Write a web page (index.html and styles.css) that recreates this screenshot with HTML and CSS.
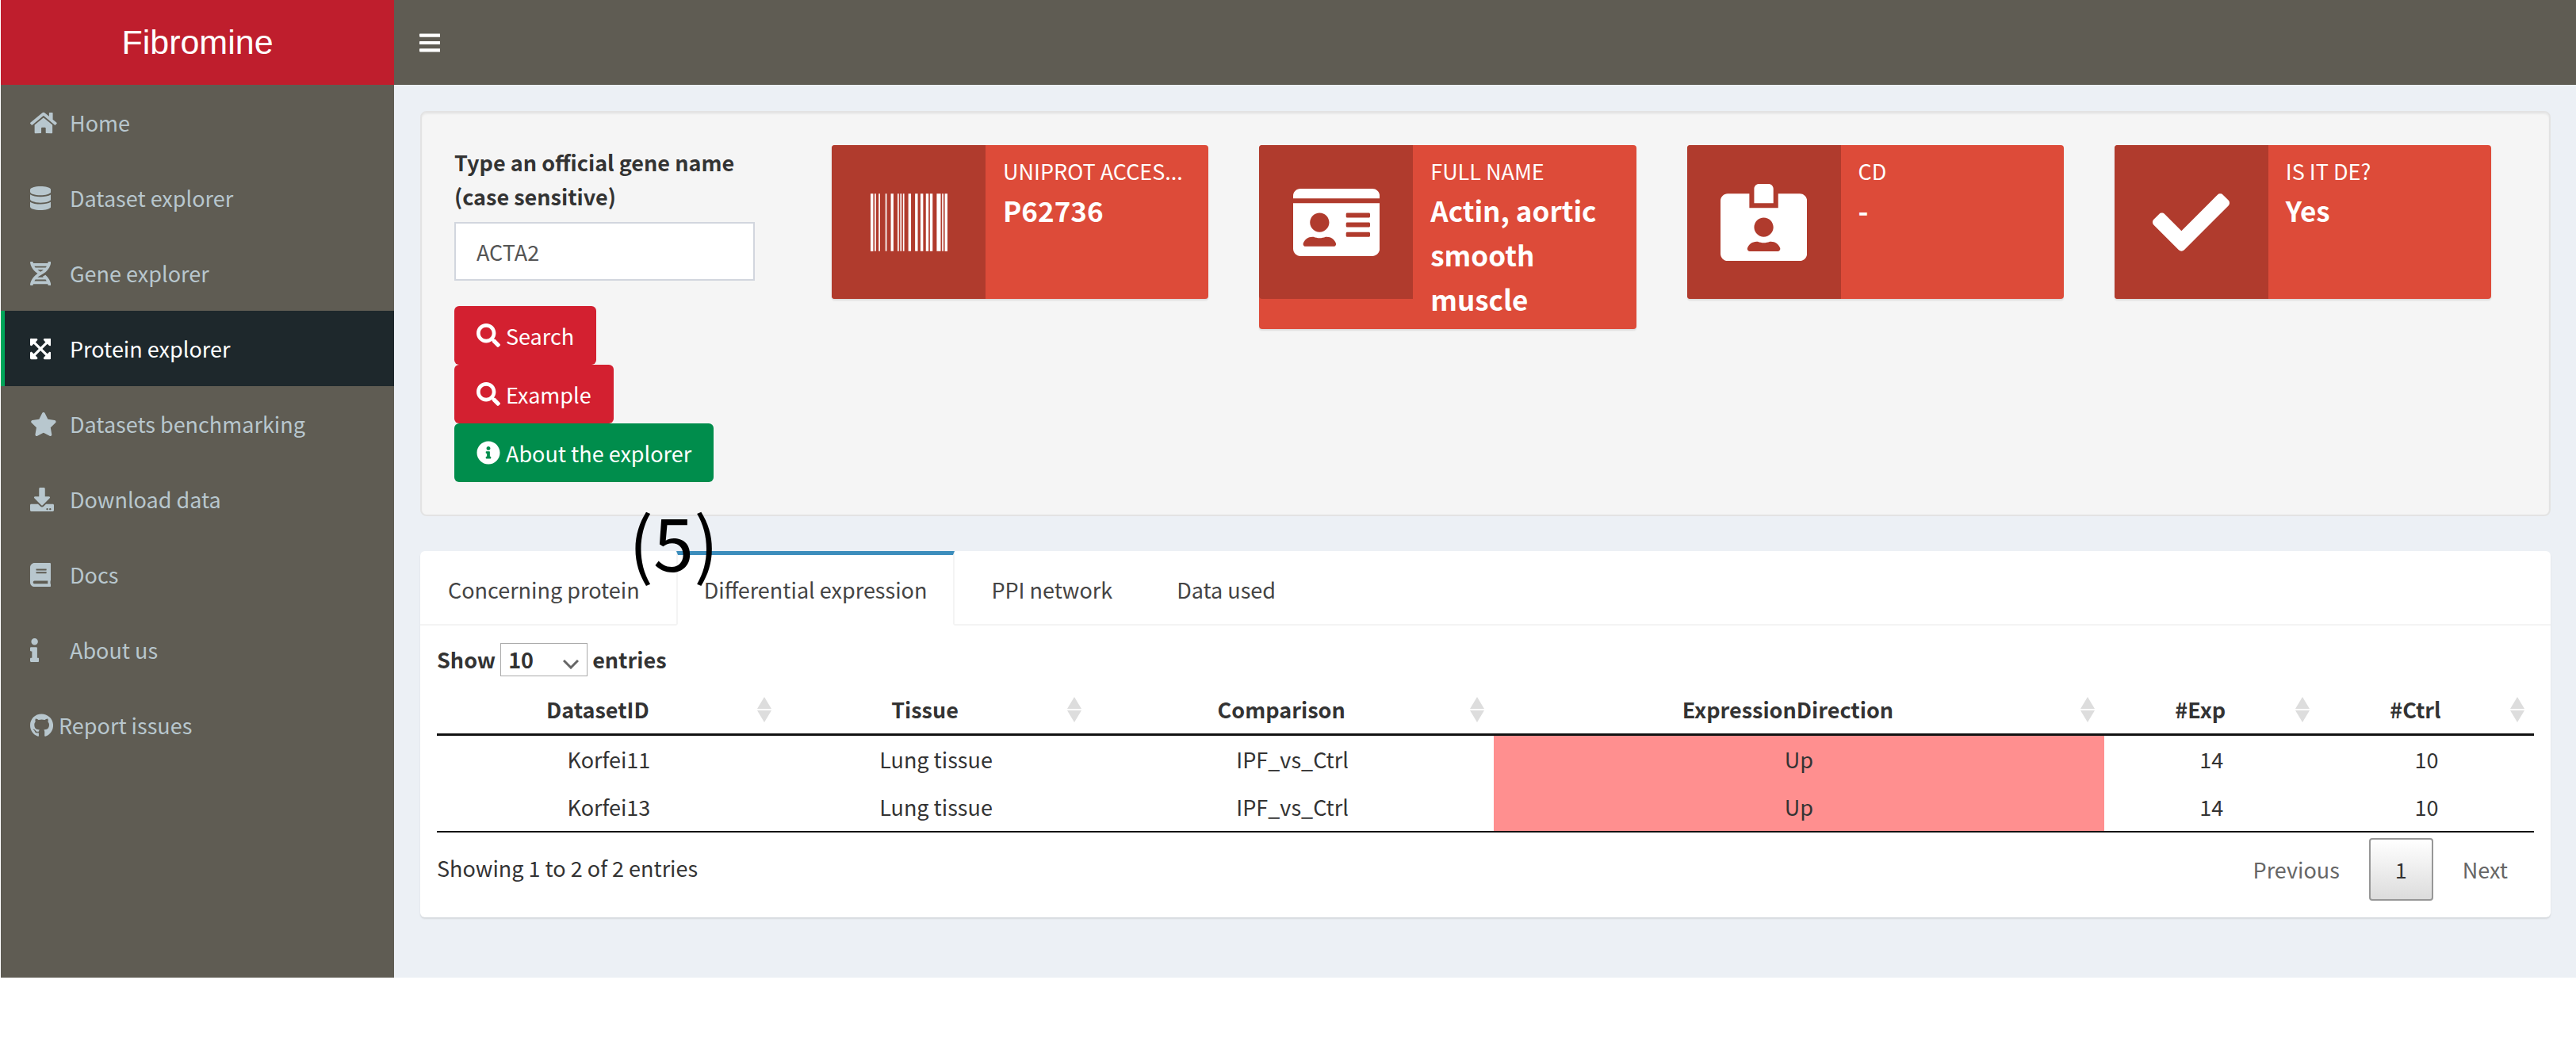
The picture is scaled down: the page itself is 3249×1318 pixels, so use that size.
FILE: index.html
```html
<!DOCTYPE html>
<html lang="en">
<head>
<meta charset="utf-8">
<title>Fibromine</title>
<link rel="stylesheet" href="styles.css">
</head>
<body>
<div class="app">
  <header class="header">
    <a class="logo" href="#">Fibromine</a>
    <nav class="navbar">
      <button class="toggle" type="button" aria-label="Toggle navigation">
        <svg class="icon" viewBox="0 0 448 512"><path d="M16 132h416c8.837 0 16-7.163 16-16V76c0-8.837-7.163-16-16-16H16C7.163 60 0 67.163 0 76v40c0 8.837 7.163 16 16 16zm0 160h416c8.837 0 16-7.163 16-16v-40c0-8.837-7.163-16-16-16H16c-8.837 0-16 7.163-16 16v40c0 8.837 7.163 16 16 16zm0 160h416c8.837 0 16-7.163 16-16v-40c0-8.837-7.163-16-16-16H16c-8.837 0-16 7.163-16 16v40c0 8.837 7.163 16 16 16z"/></svg>
      </button>
    </nav>
  </header>
  <div class="body">
    <aside class="sidebar">
      <ul class="menu">
        <li><a class="menu-link" href="#"><span class="menu-icon"><svg class="icon" viewBox="0 0 576 512"><path d="M280.37 148.26L96 300.11V464a16 16 0 0 0 16 16l112.06-.29a16 16 0 0 0 15.92-16V368a16 16 0 0 1 16-16h64a16 16 0 0 1 16 16v95.64a16 16 0 0 0 16 16.05L464 480a16 16 0 0 0 16-16V300L295.67 148.26a12.19 12.19 0 0 0-15.3 0zM571.6 251.47L488 182.56V44.05a12 12 0 0 0-12-12h-56a12 12 0 0 0-12 12v72.61L318.47 43a48 48 0 0 0-61 0L4.34 251.47a12 12 0 0 0-1.6 16.9l25.5 31A12 12 0 0 0 45.15 301l235.22-193.74a12.19 12.19 0 0 1 15.3 0L530.9 301a12 12 0 0 0 16.9-1.6l25.5-31a12 12 0 0 0-1.7-16.93z"/></svg></span>Home</a></li>
        <li><a class="menu-link" href="#"><span class="menu-icon"><svg class="icon" viewBox="0 0 448 512"><path d="M448 73.143v45.714C448 159.143 347.667 192 224 192S0 159.143 0 118.857V73.143C0 32.857 100.333 0 224 0s224 32.857 224 73.143zM448 176v102.857C448 319.143 347.667 352 224 352S0 319.143 0 278.857V176c48.125 33.143 136.208 48.572 224 48.572S399.874 209.143 448 176zm0 160v102.857C448 479.143 347.667 512 224 512S0 479.143 0 438.857V336c48.125 33.143 136.208 48.572 224 48.572S399.874 369.143 448 336z"/></svg></span>Dataset explorer</a></li>
        <li><a class="menu-link" href="#"><span class="menu-icon"><svg class="icon" viewBox="0 0 448 512"><path d="M.1 494.1c-1.1 9.5 6.3 17.8 15.9 17.8l32.3.1c8.1 0 14.9-5.9 16-13.9.7-4.9 1.8-11.1 3.4-18.1H380c1.6 6.9 2.9 13.2 3.5 18.1 1.1 8 7.9 14 16 13.9l32.3-.1c9.6 0 17.1-8.3 15.9-17.8-4.6-37.9-25.6-129-118.9-207.7-17.6 12.4-37.1 24.2-58.5 35.4 6.2 4.6 11.4 9.4 17 14.2H159.7c21.3-18.1 47-35.6 78.7-51.4C410.5 199.1 442.1 65.8 447.9 17.9 449 8.4 441.6.1 432 .1L399.6 0c-8.1 0-14.9 5.9-16 13.9-.7 4.9-1.8 11.1-3.4 18.1H67.8c-1.6-7-2.7-13.1-3.4-18.1-1.1-8-7.9-14-16-13.9L16.1.1C6.5.1-1 8.4.1 17.9 5.3 60.8 31.4 171.8 160 256 31.5 340.2 5.3 451.2.1 494.1zM224 219.6c-25.1-13.7-46.4-28.4-64.3-43.6h128.5c-17.8 15.2-39.1 30-64.2 43.6zM355.1 96c-5.8 10.4-12.8 21.1-21 32H114c-8.3-10.9-15.3-21.6-21-32h262.1zM92.9 416c5.8-10.4 12.8-21.1 21-32h219.4c8.3 10.9 15.4 21.6 21.2 32H92.9z"/></svg></span>Gene explorer</a></li>
        <li><a class="menu-link active" href="#" aria-current="page"><span class="menu-icon"><svg class="icon" viewBox="0 0 448 512"><path d="M448 344v112a23.94 23.94 0 0 1-24 24H312c-21.39 0-32.09-25.9-17-41l36.2-36.2L224 295.6 116.77 402.9 153 439c15.09 15.1 4.39 41-17 41H24a23.94 23.94 0 0 1-24-24V344c0-21.4 25.89-32.1 41-17l36.19 36.2L184.46 256 77.18 148.7 41 185c-15.1 15.1-41 4.4-41-17V56a23.94 23.94 0 0 1 24-24h112c21.39 0 32.09 25.9 17 41l-36.2 36.2L224 216.4l107.23-107.3L295 73c-15.09-15.1-4.39-41 17-41h112a23.94 23.94 0 0 1 24 24v112c0 21.4-25.89 32.1-41 17l-36.19-36.2L263.54 256l107.28 107.3L407 327.1c15.1-15.2 41-4.5 41 16.9z"/></svg></span>Protein explorer</a></li>
        <li><a class="menu-link" href="#"><span class="menu-icon"><svg class="icon" viewBox="0 0 576 512"><path d="M259.3 17.8L194 150.2 47.9 171.5c-26.2 3.8-36.7 36.1-17.7 54.6l105.7 103-25 145.5c-4.5 26.3 23.2 46 46.4 33.7L288 439.6l130.7 68.7c23.2 12.2 50.9-7.4 46.4-33.7l-25-145.5 105.7-103c19-18.5 8.5-50.8-17.7-54.6L382 150.2 316.7 17.8c-11.7-23.6-45.6-23.9-57.4 0z"/></svg></span>Datasets benchmarking</a></li>
        <li><a class="menu-link" href="#"><span class="menu-icon"><svg class="icon" viewBox="0 0 512 512"><path d="M216 0h80c13.3 0 24 10.7 24 24v168h87.7c17.8 0 26.7 21.5 14.1 34.1L269.7 378.3c-7.5 7.5-19.8 7.5-27.3 0L90.1 226.1c-12.6-12.6-3.7-34.1 14.1-34.1H192V24c0-13.3 10.7-24 24-24zm296 376v112c0 13.3-10.7 24-24 24H24c-13.3 0-24-10.7-24-24V376c0-13.3 10.7-24 24-24h146.7l49 49c20.1 20.1 52.5 20.1 72.6 0l49-49H488c13.3 0 24 10.7 24 24zm-124 88c0-11-9-20-20-20s-20 9-20 20 9 20 20 20 20-9 20-20zm64 0c0-11-9-20-20-20s-20 9-20 20 9 20 20 20 20-9 20-20z"/></svg></span>Download data</a></li>
        <li><a class="menu-link" href="#"><span class="menu-icon"><svg class="icon" viewBox="0 0 448 512"><path d="M448 360V24c0-13.3-10.7-24-24-24H96C43 0 0 43 0 96v320c0 53 43 96 96 96h328c13.3 0 24-10.7 24-24v-16c0-7.5-3.5-14.3-8.9-18.7-4.2-15.4-4.2-59.3 0-74.7 5.4-4.3 8.9-11.1 8.9-18.6zM128 134c0-3.3 2.7-6 6-6h212c3.3 0 6 2.7 6 6v20c0 3.3-2.7 6-6 6H134c-3.3 0-6-2.7-6-6v-20zm0 64c0-3.3 2.7-6 6-6h212c3.3 0 6 2.7 6 6v20c0 3.3-2.7 6-6 6H134c-3.3 0-6-2.7-6-6v-20zm253.4 250H96c-17.7 0-32-14.3-32-32 0-17.6 14.4-32 32-32h285.4c-1.9 17.1-1.9 46.9 0 64z"/></svg></span>Docs</a></li>
        <li><a class="menu-link" href="#"><span class="menu-icon"><svg class="icon" viewBox="0 0 192 512"><path d="M20 424.229h20V279.771H20c-11.046 0-20-8.954-20-20V212c0-11.046 8.954-20 20-20h112c11.046 0 20 8.954 20 20v212.229h20c11.046 0 20 8.954 20 20V492c0 11.046-8.954 20-20 20H20c-11.046 0-20-8.954-20-20v-47.771c0-11.046 8.954-20 20-20zM96 0C56.235 0 24 32.235 24 72s32.235 72 72 72 72-32.235 72-72S135.764 0 96 0z"/></svg></span>About us</a></li>
        <li><a class="menu-link" href="#"><span class="menu-icon compact"><svg class="icon" viewBox="0 0 496 512"><path d="M165.9 397.4c0 2-2.3 3.6-5.2 3.6-3.3.3-5.6-1.3-5.6-3.6 0-2 2.3-3.6 5.2-3.6 3-.3 5.6 1.3 5.6 3.6zm-31.1-4.5c-.7 2 1.3 4.3 4.3 4.9 2.6 1 5.6 0 6.2-2s-1.3-4.3-4.3-5.2c-2.6-.7-5.5.3-6.2 2.3zm44.2-1.7c-2.9.7-4.9 2.6-4.6 4.9.3 2 2.9 3.3 5.9 2.6 2.9-.7 4.9-2.6 4.6-4.6-.3-1.9-3-3.2-5.9-2.9zM244.8 8C106.1 8 0 113.3 0 252c0 110.9 69.8 205.8 169.5 239.2 12.8 2.3 17.3-5.6 17.3-12.1 0-6.2-.3-40.4-.3-61.4 0 0-70 15-84.7-29.8 0 0-11.4-29.1-27.8-36.6 0 0-22.9-15.7 1.6-15.4 0 0 24.9 2 38.6 25.8 21.9 38.6 58.6 27.5 72.9 20.9 2.3-16 8.8-27.1 16-33.7-55.9-6.2-112.3-14.3-112.3-110.5 0-27.5 7.6-41.3 23.6-58.9-2.6-6.5-11.1-33.3 2.6-67.9 20.9-6.5 69 27 69 27 20-5.6 41.5-8.5 62.8-8.5s42.8 2.9 62.8 8.5c0 0 48.1-33.6 69-27 13.7 34.7 5.2 61.4 2.6 67.9 16 17.7 25.8 31.5 25.8 58.9 0 96.5-58.9 104.2-114.8 110.5 9.2 7.9 17 22.9 17 46.4 0 33.7-.3 75.4-.3 83.6 0 6.5 4.6 14.4 17.3 12.1C428.2 457.8 496 362.9 496 252 496 113.3 383.5 8 244.8 8z"/></svg></span>Report issues</a></li>
      </ul>
    </aside>
    <main class="content">
      <section class="well">
        <form class="search">
          <label class="search-label" for="gene">Type an official gene name (case sensitive)</label>
          <input class="search-input" id="gene" type="text" value="ACTA2">
          <button class="btn btn-red" type="button"><svg class="icon" viewBox="0 0 512 512"><path d="M505 442.7L405.3 343c-4.5-4.5-10.6-7-17-7H372c27.6-35.3 44-79.7 44-128C416 93.1 322.9 0 208 0S0 93.1 0 208s93.1 208 208 208c48.3 0 92.7-16.4 128-44v16.3c0 6.4 2.5 12.5 7 17l99.7 99.7c9.4 9.4 24.6 9.4 33.9 0l28.3-28.3c9.4-9.4 9.4-24.6.1-34zM208 336c-70.7 0-128-57.2-128-128 0-70.7 57.2-128 128-128 70.7 0 128 57.2 128 128 0 70.7-57.2 128-128 128z"/></svg>Search</button>
          <button class="btn btn-red" type="button"><svg class="icon" viewBox="0 0 512 512"><path d="M505 442.7L405.3 343c-4.5-4.5-10.6-7-17-7H372c27.6-35.3 44-79.7 44-128C416 93.1 322.9 0 208 0S0 93.1 0 208s93.1 208 208 208c48.3 0 92.7-16.4 128-44v16.3c0 6.4 2.5 12.5 7 17l99.7 99.7c9.4 9.4 24.6 9.4 33.9 0l28.3-28.3c9.4-9.4 9.4-24.6.1-34zM208 336c-70.7 0-128-57.2-128-128 0-70.7 57.2-128 128-128 70.7 0 128 57.2 128 128 0 70.7-57.2 128-128 128z"/></svg>Example</button>
          <button class="btn btn-green" type="button"><svg class="icon" viewBox="0 0 512 512"><path d="M256 8C119.043 8 8 119.083 8 256c0 136.997 111.043 248 248 248s248-111.003 248-248C504 119.083 392.957 8 256 8zm0 110c23.196 0 42 18.804 42 42s-18.804 42-42 42-42-18.804-42-42 18.804-42 42-42zm56 254c0 6.627-5.373 12-12 12h-88c-6.627 0-12-5.373-12-12v-24c0-6.627 5.373-12 12-12h12v-64h-12c-6.627 0-12-5.373-12-12v-24c0-6.627 5.373-12 12-12h64c6.627 0 12 5.373 12 12v100h12c6.627 0 12 5.373 12 12v24z"/></svg>About the explorer</button>
        </form>
        <div class="boxes">
          <div class="box">
            <div class="box-icon"><svg class="icon-big" viewBox="0 0 512 512"><path d="M0 448V64h18v384H0zm26.857-.273V64H36v383.727h-9.143zm27.143 0V64h8.857v383.727H54zm44.857 0V64h8.857v383.727h-8.857zm36 0V64h17.714v383.727h-17.714zm44.857 0V64h8.857v383.727h-8.857zm18 0V64h8.857v383.727h-8.857zm18 0V64h8.857v383.727h-8.857zm35.715 0V64h18v383.727h-18zm44.857 0V64h18v383.727h-18zm35.999 0V64h18.001v383.727h-18.001zm36.001 0V64h18.001v383.727h-18.001zm26.857 0V64h18v383.727h-18zm45.143 0V64h26.857v383.727h-26.857zm35.714 0V64h9.143v383.727H476zm18 .273V64h18v384h-18z"/></svg></div>
            <div class="box-text"><span class="box-title">UNIPROT ACCES...</span><strong class="box-value">P62736</strong></div>
          </div>
          <div class="box">
            <div class="box-icon"><svg class="icon-big" viewBox="0 0 576 512"><path d="M528 32H48C21.5 32 0 53.5 0 80v16h576V80c0-26.5-21.5-48-48-48zM0 432c0 26.5 21.5 48 48 48h480c26.5 0 48-21.5 48-48V128H0v304zm352-232c0-4.4 3.6-8 8-8h144c4.4 0 8 3.6 8 8v16c0 4.4-3.6 8-8 8H360c-4.4 0-8-3.6-8-8v-16zm0 64c0-4.4 3.6-8 8-8h144c4.4 0 8 3.6 8 8v16c0 4.4-3.6 8-8 8H360c-4.4 0-8-3.6-8-8v-16zm0 64c0-4.4 3.6-8 8-8h144c4.4 0 8 3.6 8 8v16c0 4.4-3.6 8-8 8H360c-4.4 0-8-3.6-8-8v-16zM176 192c35.3 0 64 28.7 64 64s-28.7 64-64 64-64-28.7-64-64 28.7-64 64-64zM67.1 396.2C75.5 370.5 99.6 352 128 352h8.2c12.3 5.1 25.7 8 39.8 8s27.6-2.9 39.8-8h8.2c28.4 0 52.5 18.5 60.9 44.2 3.2 9.9-5.2 19.8-15.6 19.8H82.7c-10.4 0-18.8-10-15.6-19.8z"/></svg></div>
            <div class="box-text"><span class="box-title">FULL NAME</span><strong class="box-value">Actin, aortic smooth muscle</strong></div>
          </div>
          <div class="box">
            <div class="box-icon"><svg class="icon-big" viewBox="0 0 576 512"><path d="M528 64H384v96H192V64H48C21.5 64 0 85.5 0 112v352c0 26.5 21.5 48 48 48h480c26.5 0 48-21.5 48-48V112c0-26.5-21.5-48-48-48zM288 224c35.3 0 64 28.7 64 64s-28.7 64-64 64-64-28.7-64-64 28.7-64 64-64zm93.3 224H194.7c-10.4 0-18.8-10-15.6-19.8 8.3-25.6 32.4-44.2 60.9-44.2h8.2c12.3 5.1 25.7 8 39.8 8s27.6-2.9 39.8-8h8.2c28.4 0 52.5 18.5 60.9 44.2 3.2 9.9-5.2 19.8-15.6 19.8zM352 32c0-17.7-14.3-32-32-32h-64c-17.7 0-32 14.3-32 32v96h128V32z"/></svg></div>
            <div class="box-text"><span class="box-title">CD</span><strong class="box-value">-</strong></div>
          </div>
          <div class="box">
            <div class="box-icon"><svg class="icon-big" viewBox="0 0 512 512"><path d="M173.898 439.404l-166.4-166.4c-9.997-9.997-9.997-26.206 0-36.204l36.203-36.204c9.997-9.998 26.207-9.998 36.204 0L192 312.69 432.095 72.596c9.997-9.997 26.207-9.997 36.204 0l36.203 36.204c9.997 9.997 9.997 26.206 0 36.204l-294.4 294.401c-9.998 9.997-26.207 9.997-36.204-.001z"/></svg></div>
            <div class="box-text"><span class="box-title">IS IT DE?</span><strong class="box-value">Yes</strong></div>
          </div>
        </div>
      </section>

      <section class="panel">
        <span class="step">(5)</span>
        <nav class="tabs">
          <a class="tab" href="#">Concerning protein</a>
          <a class="tab active" href="#">Differential expression</a>
          <a class="tab" href="#">PPI network</a>
          <a class="tab" href="#">Data used</a>
        </nav>
        <div class="pane">
          <label class="length">Show
            <span class="select-wrap">
              <select class="select"><option selected>10</option><option>25</option><option>50</option><option>100</option></select>
              <svg class="chevron" viewBox="0 0 20 12"><path d="M1 1l9 9 9-9" fill="none" stroke="#666" stroke-width="3"/></svg>
            </span>
            entries</label>
          <table class="table">
            <colgroup><col class="c-id"><col class="c-tissue"><col class="c-comp"><col class="c-dir"><col class="c-num"><col class="c-num"></colgroup>
            <thead>
              <tr>
                <th><div class="sort"><span>DatasetID</span><svg class="arrows" viewBox="0 0 18 32"><path d="M0 15L9 0l9 15zM0 17h18L9 32z"/></svg></div></th>
                <th><div class="sort"><span>Tissue</span><svg class="arrows" viewBox="0 0 18 32"><path d="M0 15L9 0l9 15zM0 17h18L9 32z"/></svg></div></th>
                <th><div class="sort"><span>Comparison</span><svg class="arrows" viewBox="0 0 18 32"><path d="M0 15L9 0l9 15zM0 17h18L9 32z"/></svg></div></th>
                <th><div class="sort"><span>ExpressionDirection</span><svg class="arrows" viewBox="0 0 18 32"><path d="M0 15L9 0l9 15zM0 17h18L9 32z"/></svg></div></th>
                <th><div class="sort"><span>#Exp</span><svg class="arrows" viewBox="0 0 18 32"><path d="M0 15L9 0l9 15zM0 17h18L9 32z"/></svg></div></th>
                <th><div class="sort"><span>#Ctrl</span><svg class="arrows" viewBox="0 0 18 32"><path d="M0 15L9 0l9 15zM0 17h18L9 32z"/></svg></div></th>
              </tr>
            </thead>
            <tbody>
              <tr><td>Korfei11</td><td>Lung tissue</td><td>IPF_vs_Ctrl</td><td class="up">Up</td><td>14</td><td>10</td></tr>
              <tr><td>Korfei13</td><td>Lung tissue</td><td>IPF_vs_Ctrl</td><td class="up">Up</td><td>14</td><td>10</td></tr>
            </tbody>
          </table>
          <div class="table-foot">
            <span class="info">Showing 1 to 2 of 2 entries</span>
            <div class="pager">
              <button class="page" type="button">Previous</button>
              <button class="page current" type="button">1</button>
              <button class="page" type="button">Next</button>
            </div>
          </div>
        </div>
      </section>
    </main>
  </div>
</div>
</body>
</html>
```
FILE: styles.css
```css
* {
  box-sizing: border-box;
}

body {
  margin: 0;
  background: #fff;
  color: #333;
  font-family: "Noto Sans CJK SC", "Open Sans", sans-serif;
  font-size: 27px;
  line-height: 43px;
}

a {
  color: inherit;
  text-decoration: none;
}

button,
input,
select {
  margin: 0;
  font: inherit;
  color: inherit;
}

.app {
  margin-left: 1px;
}

.icon {
  flex: none;
  display: block;
  height: 30px;
  fill: currentColor;
}

/* Header */

.header,
.body {
  display: grid;
  grid-template-columns: 496px 1fr;
}

.logo {
  padding: 32px 0;
  background: #bf1e2d;
  color: #fff;
  font-family: "Liberation Sans", Arial, sans-serif;
  font-size: 43px;
  text-align: center;
}

.navbar {
  display: flex;
  align-items: center;
  padding-left: 32px;
  background: #5f5c53;
}

.toggle {
  padding: 0;
  border: 0;
  background: none;
  color: #fff;
}

/* Sidebar */

.sidebar {
  background: #5f5c53;
}

.menu {
  margin: 0;
  padding: 0;
  list-style: none;
}

.menu-link {
  display: flex;
  align-items: center;
  padding: 26px 11px 26px 32px;
  border-left: 5px solid transparent;
  color: #b8c7ce;
}

.menu-link.active {
  border-left-color: #00a65a;
  background: #1e282c;
  color: #fff;
}

.menu-icon {
  width: 50px;
}

.menu-icon.compact {
  width: 36px;
}

/* Content */

.content {
  padding: 33px 32px 76px 33px;
  background: #ecf0f5;
}

.well {
  display: grid;
  grid-template-columns: 379px 1fr;
  column-gap: 97px;
  padding: 41px 73px 41px 41px;
  border: 2px solid #e3e3e3;
  border-radius: 8px;
  background: #f5f5f5;
  box-shadow: inset 0 2px 2px rgba(0, 0, 0, 0.05);
}

.search {
  display: flex;
  flex-direction: column;
  align-items: flex-start;
}

.search-label {
  margin-bottom: 11px;
  font-weight: 700;
}

.search-input {
  width: 100%;
  height: 74px;
  margin-bottom: 32px;
  padding: 0 26px;
  border: 2px solid #d2d6de;
  background: #fff;
  color: #555;
}

.btn {
  display: flex;
  align-items: center;
  gap: 7px;
  height: 74px;
  padding: 0 28px;
  border: 0;
  border-radius: 6px;
  color: #fff;
}

.btn-red {
  background: #d32030;
}

.btn-green {
  background: #008d4c;
}

.boxes {
  display: grid;
  grid-template-columns: repeat(4, 1fr);
  column-gap: 64px;
  align-items: start;
}

.box {
  display: grid;
  grid-template-columns: 194px 1fr;
  align-items: start;
  min-height: 194px;
  border-radius: 4px;
  background: #dd4b39;
  color: #fff;
  box-shadow: 0 2px 2px rgba(0, 0, 0, 0.1);
}

.box-icon {
  display: flex;
  align-items: center;
  justify-content: center;
  height: 194px;
  border-radius: 4px 0 0 4px;
  background: #b03b2d;
}

.icon-big {
  height: 97px;
  fill: currentColor;
}

.box-text {
  padding: 11px 22px 10px;
}

.box-title,
.box-value {
  display: block;
}

.box-title {
  white-space: nowrap;
}

.box-value {
  font-size: 35px;
  line-height: 56px;
}

/* Tabbed panel */

.panel {
  position: relative;
  margin-top: 44px;
  border-radius: 6px;
  background: #fff;
  box-shadow: 0 2px 2px rgba(0, 0, 0, 0.1);
}

.step {
  position: absolute;
  top: -64px;
  left: 263px;
  color: #000;
  font-size: 92px;
  line-height: 100px;
}

.tabs {
  display: flex;
  gap: 11px;
  border-bottom: 2px solid #f4f4f4;
}

.tab {
  margin-bottom: -2px;
  padding: 22px 33px;
  border: solid transparent;
  border-width: 5px 2px 2px;
  color: #444;
}

.tab.active {
  border-color: #3c8dbc #f4f4f4 #fff;
  background: #fff;
}

.pane {
  padding: 21px;
}

.length {
  display: flex;
  align-items: center;
  gap: 6px;
  font-weight: 700;
}

.select-wrap {
  display: grid;
  align-items: center;
}

.select,
.chevron {
  grid-area: 1 / 1;
}

.select {
  width: 110px;
  height: 42px;
  padding: 0 9px;
  border: 1px solid #aaa;
  border-radius: 0;
  background: #fff;
  line-height: 40px;
  appearance: none;
}

.chevron {
  justify-self: end;
  width: 20px;
  margin: 12px 11px 0 0;
  pointer-events: none;
}

.table {
  width: 100%;
  margin-top: 12px;
  border-collapse: separate;
  border-spacing: 0;
  border-bottom: 2px solid #111;
  table-layout: fixed;
  text-align: center;
}

.c-id {
  width: 16.4%;
}

.c-tissue {
  width: 14.8%;
}

.c-comp {
  width: 19.2%;
}

.c-dir {
  width: 29.1%;
}

.table th {
  padding: 8px 12px 9px 9px;
  border-bottom: 3px solid #111;
}

.table td {
  padding: 8px 9px 9px;
}

.sort {
  display: flex;
  align-items: center;
  gap: 7px;
}

.sort span {
  flex: 1;
}

.arrows {
  width: 18px;
  height: 32px;
  fill: #ddd;
}

.table .up {
  background: #ff8f8f;
}

.table-foot {
  display: flex;
  align-items: flex-start;
  justify-content: space-between;
  padding-top: 7px;
}

.info {
  padding-top: 16px;
}

.pager {
  display: flex;
  gap: 4px;
}

.page {
  padding: 16px 31px;
  border: 2px solid transparent;
  border-radius: 4px;
  background: none;
  color: #666;
}

.page.current {
  border-color: #979797;
  background: linear-gradient(#fff, #dcdcdc);
  color: #333;
}
```
